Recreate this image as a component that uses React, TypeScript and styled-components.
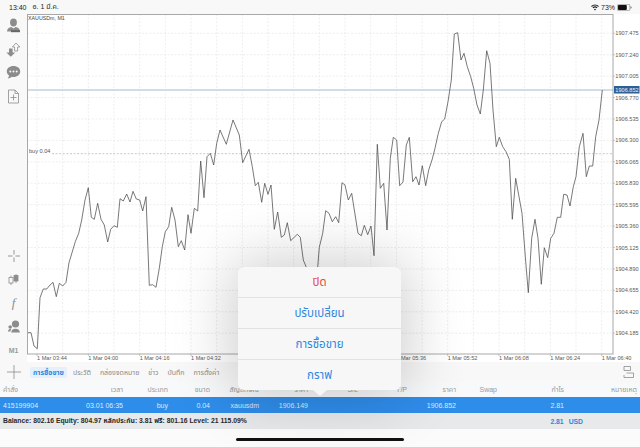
import styled, { createGlobalStyle } from "styled-components";

const GlobalStyle = createGlobalStyle`
    html, body {
        margin: 0;
        padding: 0;
        background: #f8f8f8;
    }
    * {
        box-sizing: border-box;
    }
`;

const FONT = `"Liberation Sans", "Noto Sans", "Noto Sans Thai", sans-serif`;
const BLUE = "#2e86e0";
const ICON_GREY = "#8c8c8c";

const Page = styled.div`
    position: relative;
    width: 640px;
    height: 447px;
    display: flex;
    flex-direction: column;
    overflow: hidden;
    background: #f8f8f8;
    font-family: ${FONT};
    color: #333;
`;

const StatusBar = styled.div`
    height: 14px;
    display: flex;
    align-items: center;
    justify-content: space-between;
    padding: 0 8px 0 9px;
    font-size: 7px;
    color: #222;
`;

const StatusGroup = styled.div`
    display: flex;
    align-items: center;
    gap: 6px;
`;

const StatusRight = styled(StatusGroup)`
    gap: 2px;
`;

const Main = styled.div`
    height: 348px;
    display: flex;
`;

const Sidebar = styled.div`
    width: 27px;
    display: flex;
    flex-direction: column;
    justify-content: space-between;
`;

const IconGroup = styled.div`
    display: flex;
    flex-direction: column;
`;

const IconCell = styled.div`
    height: 23.5px;
    display: flex;
    align-items: center;
    justify-content: center;
    color: ${ICON_GREY};
`;

const FnGlyph = styled.span`
    font-family: "Liberation Serif", serif;
    font-style: italic;
    font-size: 13px;
    color: ${ICON_GREY};
`;

const PeriodGlyph = styled.span`
    font-size: 7px;
    font-weight: 700;
    color: #9a9a9a;
`;

const ChartArea = styled.div`
    flex: 1;
    background: #fff;
`;

const ChartSvg = styled.svg`
    display: block;
    width: 613px;
    height: 348px;
    font-family: ${FONT};
`;

const TabsRow = styled.div`
    height: 20px;
    display: flex;
    align-items: center;
    padding-right: 6px;
`;

const PlusCell = styled.div`
    width: 27px;
    display: flex;
    justify-content: center;
    color: ${ICON_GREY};
`;

const Tabs = styled.div`
    flex: 1;
    display: flex;
    align-items: center;
    gap: 3px;
    padding-left: 3px;
`;

const Tab = styled.div<{ $active?: boolean }>`
    height: 11px;
    line-height: 11px;
    padding: 0 3px;
    border-radius: 2px;
    font-size: 7px;
    white-space: nowrap;
    font-weight: ${({ $active }) => ($active ? 700 : 400)};
    color: ${({ $active }) => ($active ? BLUE : "#8a8a8a")};
    background: ${({ $active }) => ($active ? "#e4f0fb" : "transparent")};
`;

const TableRow = styled.div<{ $selected?: boolean }>`
    display: grid;
    grid-template-columns: 77px 43px 45px 42px 49px 49px 50px 49px 49px 41px 67px 73px;
    align-items: center;
    height: ${({ $selected }) => ($selected ? "16px" : "15px")};
    padding: 0 3px;
    font-size: 7px;
    color: ${({ $selected }) => ($selected ? "#dcebfb" : "#9a9a9a")};
    background: ${({ $selected }) => ($selected ? "#2f8dea" : "#f7f9fb")};
`;

const Cell = styled.div<{ $left?: boolean }>`
    text-align: ${({ $left }) => ($left ? "left" : "right")};
    white-space: nowrap;
`;

const Summary = styled.div`
    height: 16px;
    display: grid;
    grid-template-columns: 1fr auto;
    align-items: center;
    padding: 0 57px 0 3px;
    background: #e7e9eb;
    font-size: 6.8px;
    font-weight: 700;
    color: #2a2a2a;
`;

const SummaryTotal = styled.div`
    display: flex;
    gap: 5px;
    color: ${BLUE};
`;

const HomeArea = styled.div`
    flex: 1;
    display: flex;
    justify-content: center;
    padding-top: 9px;
    background: #fbfbfb;
`;

const HomeIndicator = styled.div`
    width: 168px;
    height: 3px;
    border-radius: 2px;
    background: #111;
`;

const Popover = styled.div`
    position: absolute;
    left: 238px;
    top: 267px;
    width: 163px;
    height: 123px;
    display: flex;
    flex-direction: column;
    border-radius: 6px;
    background: #f7f7f7;
    box-shadow: 0 0 60px 6px rgba(0, 0, 0, 0.2);

    &::after {
        content: "";
        position: absolute;
        left: 75px;
        top: 100%;
        border-left: 7px solid transparent;
        border-right: 7px solid transparent;
        border-top: 6px solid #f7f7f7;
    }
`;

const PopoverItem = styled.div<{ $danger?: boolean }>`
    flex: 1;
    display: flex;
    align-items: center;
    justify-content: center;
    font-size: 11.5px;
    color: ${({ $danger }) => ($danger ? "#e8483f" : BLUE)};
    & + & {
        border-top: 1px solid #e2e2e2;
    }
`;

type Pt = [number, number];

// traced in 3x crops, so each run carries its own origin
const run = (ox: number, oy: number, pts: Pt[]) =>
    pts.map(([x, y]) => `${(ox + x / 3).toFixed(1)},${(oy + y / 3).toFixed(1)}`);

const PRICE_LINE = [
    ...run(25, 120, [
        [8, 638], [18, 638], [27, 678], [37, 686], [45, 533], [55, 507], [65, 507], [75, 495],
        [84, 487], [94, 530], [103, 490], [113, 498], [123, 487], [132, 428], [151, 365], [161, 340],
        [170, 300], [180, 240], [190, 203], [199, 292], [208, 298], [218, 250], [228, 298], [238, 315],
        [248, 366], [257, 328], [267, 317], [277, 322], [285, 236], [295, 243], [305, 222], [315, 246],
        [324, 214], [334, 237], [344, 240], [353, 273], [363, 230], [373, 496], [383, 494], [393, 502],
        [403, 445], [412, 380], [421, 335], [431, 320], [440, 262], [450, 300], [460, 380], [469, 362],
        [479, 390], [489, 284], [498, 340], [508, 265], [518, 273], [527, 123], [537, 233], [546, 110],
        [556, 100], [566, 135], [575, 70], [585, 30], [604, 73], [624, 0], [643, 45], [653, 128],
        [672, 88], [682, 140], [691, 197], [700, 187], [710, 247], [719, 190], [729, 223], [738, 195],
        [748, 328], [758, 276], [769, 352], [778, 345], [787, 308], [797, 362], [817, 343], [826, 352],
        [835, 420], [844, 442], [855, 470], [866, 470], [878, 442],
    ]),
    ...run(310, 170, [
        [28, 232], [38, 190], [47, 122], [57, 130], [67, 155], [77, 140], [86, 158], [96, 38],
        [105, 45], [115, 90], [125, 70], [144, 190], [154, 197], [163, 166], [173, 194], [183, 168],
        [192, 257],
    ]),
    ...run(300, 20, [
        [232, 373], [241, 505], [251, 490], [261, 630], [271, 415], [280, 352], [290, 360], [299, 497],
        [309, 486], [319, 375], [328, 352], [338, 485], [348, 470], [357, 495], [367, 437], [377, 497],
        [386, 450], [396, 420], [405, 385], [415, 340], [425, 305], [434, 297], [444, 245], [454, 180],
        [463, 42], [473, 38], [483, 120], [492, 100], [502, 140], [512, 170], [521, 205], [531, 255],
        [541, 282], [550, 210], [560, 92], [570, 130], [579, 270], [589, 380], [598, 352], [608, 380],
        [618, 395], [628, 418],
    ]),
    ...run(400, 150, [
        [337, 208], [347, 85], [357, 140], [366, 190], [376, 320], [385, 428], [395, 265], [405, 208],
        [414, 265], [424, 403], [433, 293], [443, 323], [452, 265], [462, 250], [472, 202], [482, 202],
        [491, 133], [501, 135], [510, 168], [520, 110],
    ]),
    ...run(300, 20, [
        [828, 470], [838, 380], [849, 340], [859, 470], [868, 438], [878, 438], [887, 350], [897, 300],
        [907, 210],
    ]),
].join(" ");

const PRICE_LABELS = [
    "1907.475", "1907.240", "1907.005", "1906.770", "1906.535", "1906.300", "1906.065", "1905.830",
    "1905.595", "1905.360", "1905.125", "1904.890", "1904.655", "1904.420", "1904.185",
];

const TIME_LABELS = [
    "03:44", "04:00", "04:16", "04:32", "04:48", "05:04", "05:20", "05:36", "05:52", "06:08", "06:24", "06:40",
];

const Chart = () => {
    const hLines = PRICE_LABELS.map((_, i) => 33.3 + i * 21.42);
    const vLines = Array.from({ length: 23 }, (_, i) => 37 + i * 25.67);

    return (
        <ChartSvg viewBox="27 14 613 348">
            <g stroke="#e6e6e6" strokeWidth="0.7" strokeDasharray="2 1.6">
                {hLines.map((y) => (
                    <line key={y} x1="27" x2="613" y1={y} y2={y} />
                ))}
                {vLines.map((x) => (
                    <line key={x} x1={x} x2={x} y1="14" y2="354" />
                ))}
            </g>
            <line x1="27" x2="613" y1="90" y2="90" stroke="#c3d2e0" strokeWidth="1.5" />
            <line x1="52" x2="613" y1="153.7" y2="153.7" stroke="#9fcf96" strokeWidth="0.8" strokeDasharray="2 1.6" />
            <polyline points={PRICE_LINE} fill="none" stroke="#4c4c4c" strokeWidth="0.75" strokeLinejoin="round" />
            <rect x="27.5" y="14.5" width="585.5" height="339.5" fill="none" stroke="#a8a8a8" strokeWidth="1" />

            <text x="28" y="20" fontSize="5.3" fill="#444">XAUUSDm, M1</text>
            <text x="29" y="153" fontSize="5.6" fill="#555">buy 0.04</text>

            {PRICE_LABELS.map((label, i) => (
                <g key={label}>
                    <line x1="613" x2="615" y1={hLines[i]} y2={hLines[i]} stroke="#a8a8a8" strokeWidth="0.6" />
                    <text x="615.3" y={hLines[i] + 2} fontSize="5.6" fill="#5a5a5a">{label}</text>
                </g>
            ))}
            <rect x="614" y="86" width="25.5" height="7.5" fill="#2f5f95" />
            <text x="615.3" y="92" fontSize="5.6" fill="#eef3f8">1906.852</text>

            {TIME_LABELS.map((label, i) => (
                <g key={label}>
                    <line x1={37 + i * 51.33} x2={37 + i * 51.33} y1="354" y2="356" stroke="#a8a8a8" strokeWidth="0.6" />
                    <text x={37 + i * 51.33} y="359.5" fontSize="5.6" fill="#5a5a5a">{`1 Mar ${label}`}</text>
                </g>
            ))}
        </ChartSvg>
    );
};

const WifiIcon = () => (
    <svg width="8" height="7" viewBox="0 0 16 13" fill="none" stroke="#222" strokeWidth="2.2">
        <path d="M1 4.5a10 10 0 0 1 14 0" />
        <path d="M3.8 7.4a6 6 0 0 1 8.4 0" />
        <path d="M8 12.6 5.8 10a3 3 0 0 1 4.4 0z" fill="#222" stroke="none" />
    </svg>
);

const BatteryIcon = () => (
    <svg width="15" height="7" viewBox="0 0 15 7">
        <rect x="0.3" y="0.3" width="12.6" height="6.4" rx="1.6" fill="none" stroke="#777" strokeWidth="0.6" />
        <rect x="1" y="1" width="8.8" height="5" rx="1" fill="#111" />
        <path d="M13.5 2.3c.8.2 1.2.7 1.2 1.2s-.4 1-1.2 1.2z" fill="#777" />
    </svg>
);

const PersonIcon = () => (
    <svg width="15" height="15" viewBox="0 0 15 15" fill="currentColor">
        <ellipse cx="7.5" cy="4.4" rx="3.4" ry="4" />
        <path d="M1 13.5c.3-3 1.9-3.900 4.400-4.400l2.100 1.500 2.100-1.500c2.500.5 4.100 1.400 4.400 4.400z" />
        <rect x="5" y="12.2" width="9" height="2" fill="#666" />
    </svg>
);

const TradeArrowsIcon = () => (
    <svg width="15" height="15" viewBox="0 0 15 15">
        <path d="M3 6.500h3.600v4h2.600l-4.400 4.200-4.400-4.200H3z" fill="currentColor" />
        <path d="M10 1 13.800 5h-2.200v4H8.600V5H6.400z" fill="#fafafa" stroke="currentColor" strokeWidth="0.8" />
    </svg>
);

const ChatIcon = () => (
    <svg width="15" height="15" viewBox="0 0 15 15">
        <path d="M7.500 1C3.600 1 .8 3.300.8 6.400c0 1.700.9 3.200 2.300 4.200-.1 1-.6 2-1.400 2.800 1.600-.1 3-.7 4-1.700.6.1 1.200.2 1.800.2 3.900 0 6.700-2.400 6.700-5.500S11.400 1 7.500 1z" fill="currentColor" />
        <g fill="#f8f8f8">
            <circle cx="4.300" cy="6.500" r="1" />
            <circle cx="7.500" cy="6.500" r="1" />
            <circle cx="10.700" cy="6.500" r="1" />
        </g>
    </svg>
);

const FilePlusIcon = () => (
    <svg width="13" height="15" viewBox="0 0 13 15" fill="none" stroke="currentColor" strokeWidth="0.8">
        <path d="M1.500 1h6.500l3.500 3.500v9.500h-10z" />
        <path d="M8 1v3.500h3.500" />
        <path d="M6.500 5.500v6M3.500 8.500h6" />
    </svg>
);

const CrossIcon = () => (
    <svg width="12" height="12" viewBox="0 0 12 12" stroke="currentColor" strokeWidth="0.9">
        <path d="M6 0v4.500M6 7.500V12M0 6h4.500M7.500 6H12" />
    </svg>
);

const CandlesIcon = () => (
    <svg width="11" height="12" viewBox="0 0 11 12" stroke="currentColor" strokeWidth="0.8">
        <path d="M3 1.500v9.500M8 0v9" />
        <rect x="1" y="3.500" width="4" height="5.500" fill="#f8f8f8" />
        <rect x="6" y="1.500" width="4" height="5.500" fill="currentColor" />
    </svg>
);

const SignalsIcon = () => (
    <svg width="12" height="13" viewBox="0 0 12 13" fill="currentColor">
        <circle cx="7.500" cy="4" r="3.600" />
        <path d="M3.200 12.500c.2-2.500 1.500-3.800 4.300-3.800s4.200 1.300 4.400 3.800z" />
        <circle cx="2.200" cy="7" r="1.800" />
        <path d="M0 11.500c0-1.600.7-2.600 2.200-2.600.5 0 .8.100 1.100.3-.5.700-.8 1.400-.9 2.300z" />
    </svg>
);

const PlusIcon = () => (
    <svg width="14" height="14" viewBox="0 0 14 14" stroke="currentColor" strokeWidth="0.8">
        <path d="M7 0v14M0 7h14" />
    </svg>
);

const LayoutIcon = () => (
    <svg width="11" height="12" viewBox="0 0 11 12" fill="none" stroke="#8c8c8c" strokeWidth="0.8">
        <path d="M1 .5h6.500v4H1zM3.500 7h7v4.500H1V9" />
    </svg>
);

const HEADERS = ["คำสั่ง", "เวลา", "ประเภท", "ขนาด", "สัญลักษณ์", "ราคา", "S/L", "T/P", "ราคา", "Swap", "กำไร", "หมายเหตุ"];
const ORDER = ["415199904", "03.01 06:35", "buy", "0.04", "xauusdm", "1906.149", "", "", "1906.852", "", "2.81", ""];
const TABS = ["การซื้อขาย", "ประวัติ", "กล่องจดหมาย", "ข่าว", "บันทึก", "การตั้งค่า"];

export default function App() {
    return (
        <Page>
            <GlobalStyle />
            <StatusBar>
                <StatusGroup>
                    <span>13:40</span>
                    <span>อ. 1 มี.ค.</span>
                </StatusGroup>
                <StatusRight>
                    <WifiIcon />
                    <span>73%</span>
                    <BatteryIcon />
                </StatusRight>
            </StatusBar>

            <Main>
                <Sidebar>
                    <IconGroup>
                        <IconCell><PersonIcon /></IconCell>
                        <IconCell><TradeArrowsIcon /></IconCell>
                        <IconCell><ChatIcon /></IconCell>
                        <IconCell><FilePlusIcon /></IconCell>
                    </IconGroup>
                    <IconGroup>
                        <IconCell><CrossIcon /></IconCell>
                        <IconCell><CandlesIcon /></IconCell>
                        <IconCell><FnGlyph>f</FnGlyph></IconCell>
                        <IconCell><SignalsIcon /></IconCell>
                        <IconCell><PeriodGlyph>M1</PeriodGlyph></IconCell>
                    </IconGroup>
                </Sidebar>
                <ChartArea>
                    <Chart />
                </ChartArea>
            </Main>

            <TabsRow>
                <PlusCell><PlusIcon /></PlusCell>
                <Tabs>
                    {TABS.map((tab, i) => (
                        <Tab key={tab} $active={i === 0}>{tab}</Tab>
                    ))}
                </Tabs>
                <LayoutIcon />
            </TabsRow>

            <TableRow>
                {HEADERS.map((h, i) => (
                    <Cell key={i} $left={i === 0}>{h}</Cell>
                ))}
            </TableRow>
            <TableRow $selected>
                {ORDER.map((v, i) => (
                    <Cell key={i} $left={i === 0}>{v}</Cell>
                ))}
            </TableRow>
            <Summary>
                <span>Balance: 802.16 Equity: 804.97 หลักประกัน: 3.81 ฟรี: 801.16 Level: 21 115.09%</span>
                <SummaryTotal>
                    <span>2.81</span>
                    <span>USD</span>
                </SummaryTotal>
            </Summary>
            <HomeArea>
                <HomeIndicator />
            </HomeArea>

            <Popover>
                <PopoverItem $danger>ปิด</PopoverItem>
                <PopoverItem>ปรับเปลี่ยน</PopoverItem>
                <PopoverItem>การซื้อขาย</PopoverItem>
                <PopoverItem>กราฟ</PopoverItem>
            </Popover>
        </Page>
    );
}
